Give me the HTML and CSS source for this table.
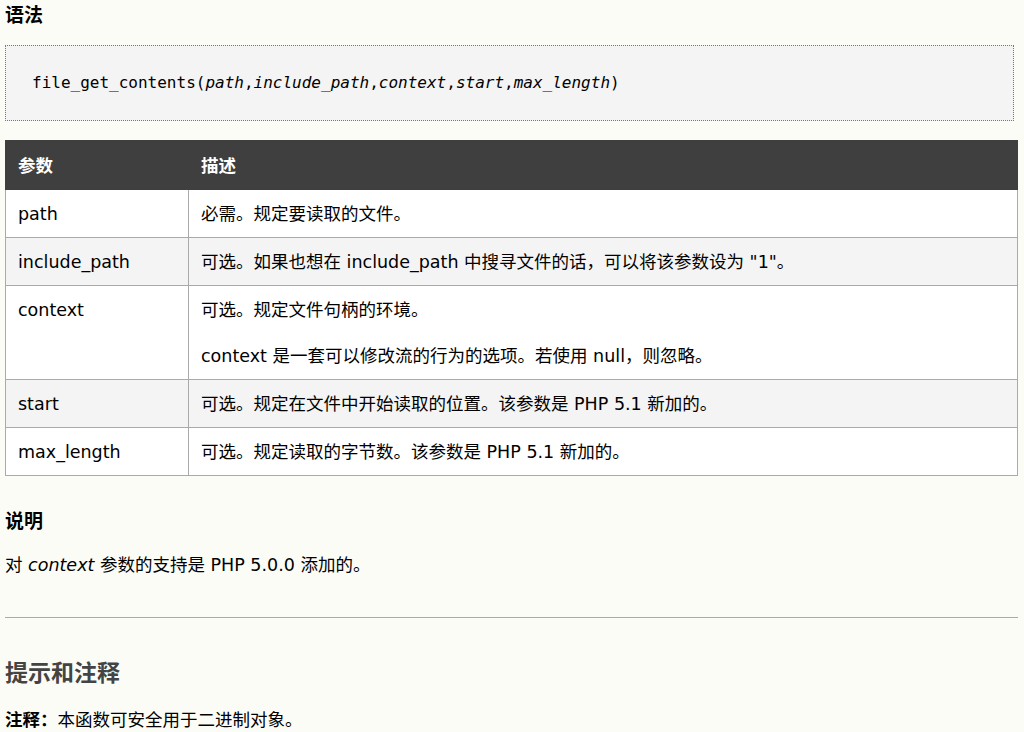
FILE: index.html
```html
<!DOCTYPE html>
<html lang="zh-CN">
<head>
<meta charset="utf-8">
<title>file_get_contents</title>
<link rel="stylesheet" href="styles.css">
</head>
<body>
<div class="main">
  <h3 class="sub first">语法</h3>
  <pre class="code">file_get_contents(<i>path</i>,<i>include_path</i>,<i>context</i>,<i>start</i>,<i>max_length</i>)</pre>
  <table class="ref">
    <thead>
      <tr><th class="c1">参数</th><th>描述</th></tr>
    </thead>
    <tbody>
      <tr><td class="c1">path</td><td>必需。规定要读取的文件。</td></tr>
      <tr class="alt"><td class="c1">include_path</td><td>可选。如果也想在 include_path 中搜寻文件的话，可以将该参数设为 "1"。</td></tr>
      <tr><td class="c1">context</td><td><p>可选。规定文件句柄的环境。</p><p>context 是一套可以修改流的行为的选项。若使用 null，则忽略。</p></td></tr>
      <tr class="alt"><td class="c1">start</td><td>可选。规定在文件中开始读取的位置。该参数是 PHP 5.1 新加的。</td></tr>
      <tr><td class="c1">max_length</td><td>可选。规定读取的字节数。该参数是 PHP 5.1 新加的。</td></tr>
    </tbody>
  </table>
  <h3 class="sub second">说明</h3>
  <p class="text">对 <i>context</i> 参数的支持是 PHP 5.0.0 添加的。</p>
  <hr class="rule">
  <h2 class="title">提示和注释</h2>
  <p class="text note"><b>注释：</b>本函数可安全用于二进制对象。</p>
</div>
</body>
</html>
```
FILE: styles.css
```css
body {
  margin: 0;
  background: #fcfcf7;
  color: #000;
  font-family: "DejaVu Sans", Verdana, "Noto Sans CJK SC", sans-serif;
  font-size: 17.5px;
}
.main {
  padding: 0 6px 0 5px;
}
.sub {
  margin: 0;
  font-size: 19px;
  line-height: 22px;
  font-weight: bold;
}
.sub.first {
  padding-top: 4px;
}
.sub.second {
  margin-top: 34px;
}
.code {
  margin: 19px 4px 0 0;
  padding: 25px 26px;
  background: #f4f4f4;
  border: 1px dotted #777;
  font-family: "DejaVu Sans Mono", "Liberation Mono", monospace;
  font-size: 16px;
  line-height: 24px;
}
.ref {
  margin-top: 19px;
  width: 100%;
  border-collapse: collapse;
  border: 1px solid #aaa;
}
.ref th {
  background: #3f3f3f;
  color: #fff;
  text-align: left;
  font-weight: bold;
  padding: 13px 12px 11px;
  line-height: 24px;
  border: 1px solid #3f3f3f;
}
.ref td {
  background: #fff;
  padding: 12px 12px 11px;
  line-height: 24px;
  border: 1px solid #aaa;
  vertical-align: top;
}
.ref tr.alt td {
  background: #f4f4f4;
}
.ref .c1 {
  width: 158px;
}
.ref p {
  margin: 0;
}
.ref p + p {
  margin-top: 22px;
}
.text {
  margin: 22px 0 0;
  line-height: 22px;
}
.rule {
  margin: 41px 0 0;
  border: 0;
  border-top: 1px solid #aaa;
  height: 0;
}
.title {
  margin: 42px 0 0;
  font-size: 23px;
  line-height: 26px;
  color: #444;
  font-weight: bold;
}
.text.note {
  margin-top: 23px;
}
```
